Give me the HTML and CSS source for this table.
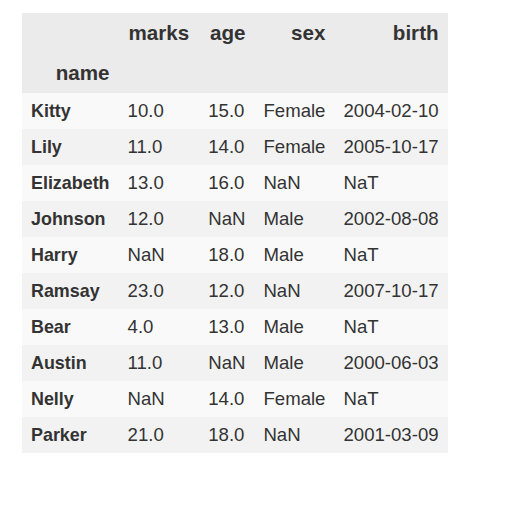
FILE: index.html
```html
<!DOCTYPE html>
<html>
<head>
<meta charset="utf-8">
<link rel="stylesheet" href="styles.css">
</head>
<body>
<div class="wrap">
<table class="df">
  <thead>
    <tr><th class="blank"></th><th class="wide">marks</th><th>age</th><th>sex</th><th>birth</th></tr>
    <tr><th class="idxname">name</th><th></th><th></th><th></th><th></th></tr>
  </thead>
  <tbody>
    <tr><th>Kitty</th><td>10.0</td><td>15.0</td><td>Female</td><td>2004-02-10</td></tr>
    <tr><th>Lily</th><td>11.0</td><td>14.0</td><td>Female</td><td>2005-10-17</td></tr>
    <tr><th>Elizabeth</th><td>13.0</td><td>16.0</td><td>NaN</td><td>NaT</td></tr>
    <tr><th>Johnson</th><td>12.0</td><td>NaN</td><td>Male</td><td>2002-08-08</td></tr>
    <tr><th>Harry</th><td>NaN</td><td>18.0</td><td>Male</td><td>NaT</td></tr>
    <tr><th>Ramsay</th><td>23.0</td><td>12.0</td><td>NaN</td><td>2007-10-17</td></tr>
    <tr><th>Bear</th><td>4.0</td><td>13.0</td><td>Male</td><td>NaT</td></tr>
    <tr><th>Austin</th><td>11.0</td><td>NaN</td><td>Male</td><td>2000-06-03</td></tr>
    <tr><th>Nelly</th><td>NaN</td><td>14.0</td><td>Female</td><td>NaT</td></tr>
    <tr><th>Parker</th><td>21.0</td><td>18.0</td><td>NaN</td><td>2001-03-09</td></tr>
  </tbody>
</table>
</div>
</body>
</html>
```
FILE: styles.css
```css
html, body {
  margin: 0;
  padding: 0;
  background: #ffffff;
}
.wrap {
  padding: 13px 0 0 22px;
}
.df {
  border-collapse: collapse;
  border-spacing: 0;
  font-family: "Liberation Sans", Arial, sans-serif;
  font-size: 18.6px;
  color: #333333;
}
.df th, .df td {
  padding: 7px 9px;
  line-height: 22px;
  white-space: nowrap;
  border: none;
}
.df thead tr {
  background: #ebebeb;
}
.df thead th {
  text-align: right;
  font-weight: bold;
  font-size: 20.6px;
  height: 26px;
  padding: 7px 9px;
}
.df thead th.wide {
  padding: 7px 10px;
}
.df tbody tr:nth-child(odd) {
  background: #f9f9f9;
}
.df tbody tr:nth-child(even) {
  background: #f2f2f2;
}
.df tbody th {
  text-align: left;
  font-weight: bold;
  font-size: 17.9px;
}
.df tbody td {
  text-align: left;
}
```
